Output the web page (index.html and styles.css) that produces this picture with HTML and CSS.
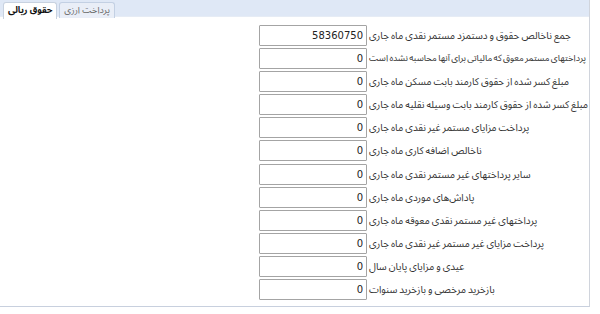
FILE: index.html
```html
<!DOCTYPE html>
<html lang="fa">
<head>
  <meta charset="UTF-8">
  <title>حقوق ریالی</title>
  <link rel="stylesheet" href="styles.css">
</head>
<body>
  <div class="panel">
    <div class="tab-strip">
      <span class="tab active">حقوق ریالی</span>
      <span class="tab">پرداخت ارزی</span>
    </div>
    <div class="panel-body">
      <div class="row"><input class="field" value="58360750"><label>جمع ناخالص حقوق و دستمزد مستمر نقدی ماه جاری</label></div>
      <div class="row"><input class="field" value="0"><label class="fit">پرداختهای مستمر معوق که مالیاتی برای آنها محاسبه نشده است</label></div>
      <div class="row"><input class="field" value="0"><label>مبلغ کسر شده از حقوق کارمند بابت مسکن ماه جاری</label></div>
      <div class="row"><input class="field" value="0"><label>مبلغ کسر شده از حقوق کارمند بابت وسیله نقلیه ماه جاری</label></div>
      <div class="row"><input class="field" value="0"><label>پرداخت مزایای مستمر غیر نقدی ماه جاری</label></div>
      <div class="row"><input class="field" value="0"><label>ناخالص اضافه کاری ماه جاری</label></div>
      <div class="row"><input class="field" value="0"><label>سایر پرداختهای غیر مستمر نقدی ماه جاری</label></div>
      <div class="row"><input class="field" value="0"><label>پاداش‌های موردی ماه جاری</label></div>
      <div class="row"><input class="field" value="0"><label>پرداختهای غیر مستمر نقدی معوقه ماه جاری</label></div>
      <div class="row"><input class="field" value="0"><label>پرداخت مزایای غیر مستمر غیر نقدی ماه جاری</label></div>
      <div class="row"><input class="field" value="0"><label>عیدی و مزایای پایان سال</label></div>
      <div class="row"><input class="field" value="0"><label>بازخرید مرخصی و بازخرید سنوات</label></div>
    </div>
  </div>
</body>
</html>
```

FILE: styles.css
```css
body {
  margin: 0;
  background: #fff;
  font-family: Tahoma, "Noto Sans Arabic", "DejaVu Sans Condensed", "DejaVu Sans", sans-serif;
  font-size: 10px;
  color: #222;
}

.panel {
  width: 589px;
  height: 306px;
  border-right: 1px solid #d0d4dc;
  border-bottom: 1px solid #c8d0de;
  background: #fff;
  overflow: hidden;
}

.tab-strip {
  display: flex;
  gap: 2px;
  height: 17px;
  padding: 2px 0 0 3px;
  box-sizing: border-box;
  background: #dfe8f6;
  border-bottom: 1px solid #e6ecf5;
}

.tab {
  padding: 0 4px;
  height: 15px;
  line-height: 15px;
  font-size: 9px;
  border: 1px solid #c3d0e3;
  border-bottom: none;
  border-radius: 3px 3px 0 0;
  background: #e9eef7;
  color: #666;
  direction: rtl;
}

.tab.active {
  background: #fff;
  color: #111;
  font-weight: bold;
  height: 16px;
  border-color: #c8d2e0;
}

.panel-body {
  padding: 8px 0 0 259px;
}

.row {
  display: flex;
  align-items: center;
  gap: 2px;
  height: 21px;
  margin-bottom: 2.1px;
}

.field {
  width: 108px;
  height: 21px;
  box-sizing: border-box;
  margin: 0;
  padding: 0 3px;
  border: 1px solid #a4a4a4;
  border-radius: 1px;
  font-family: Tahoma, "DejaVu Sans", sans-serif;
  font-size: 10px;
  color: #222;
  text-align: right;
  background: #fff;
}

.row label {
  direction: rtl;
  white-space: nowrap;
  line-height: 21px;
  word-spacing: -0.6px;
  color: #333;
}

.row label.fit {
  font-size: 9px;
  word-spacing: -1px;
}
```
